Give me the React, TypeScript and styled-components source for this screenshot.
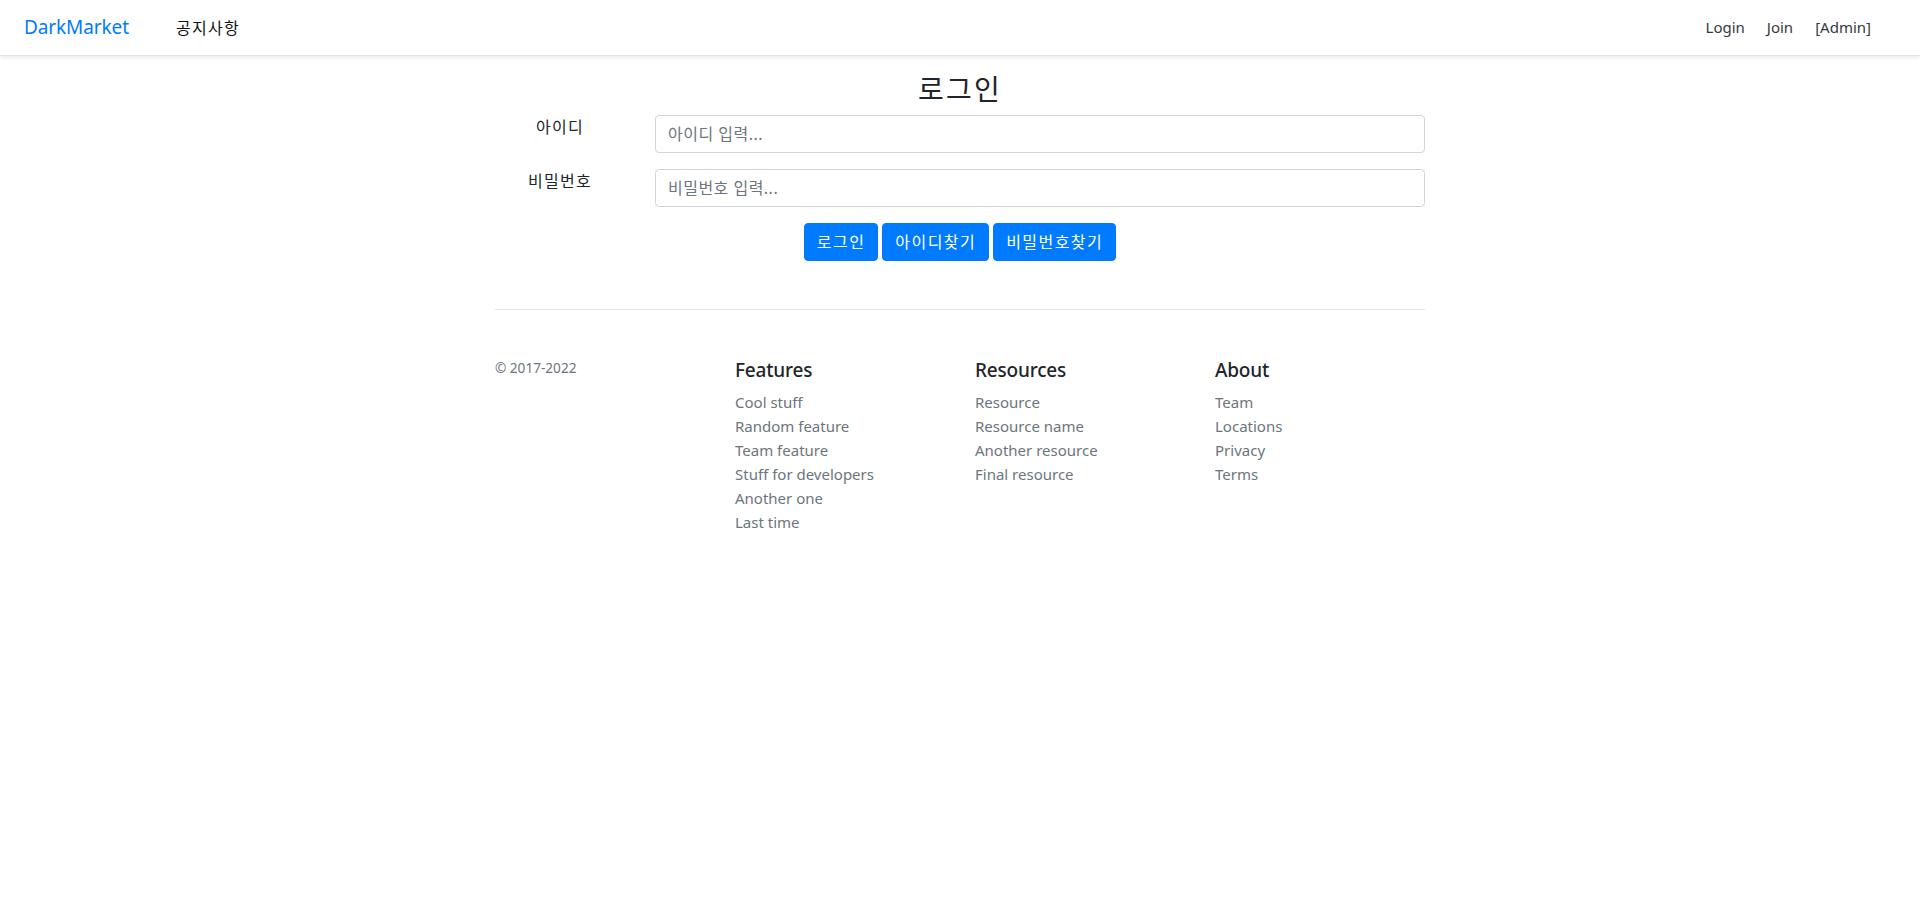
import React from "react";
import styled, { createGlobalStyle } from "styled-components";

const GlobalStyle = createGlobalStyle`
  html, body { margin: 0; padding: 0; background: #fff; }
  body {
    font-family: "Noto Sans", "Noto Sans CJK KR", sans-serif;
    font-size: 16px;
    line-height: 1.5;
    color: #212529;
  }
  * { box-sizing: border-box; }
`;

const NavBar = styled.nav`
  height: 56px;
  display: flex;
  align-items: center;
  padding: 0 49px 0 24px;
  background: #fff;
  box-shadow: 0 2px 4px rgba(0, 0, 0, 0.075);
  border-bottom: 1px solid #e3e4e8;
`;

const Brand = styled.a`
  width: 152px;
  font-size: 19px;
  letter-spacing: -0.1px;
  color: #007bff;
  text-decoration: none;
`;

const NavLink = styled.a<{ $korean?: boolean }>`
  font-size: ${(p) => (p.$korean ? "16px" : "15px")};
  letter-spacing: ${(p) => (p.$korean ? "0.08em" : "0")};
  color: ${(p) => (p.$korean ? "#111" : "#343a40")};
  text-decoration: none;
`;

const RightNav = styled.div`
  margin-left: auto;
  display: flex;
  gap: 22px;
`;

const Container = styled.main`
  width: 930px;
  margin: 0 auto;
  padding-top: 17px;
`;

const Title = styled.h3`
  margin: 0 0 8px;
  text-align: center;
  font-size: 28px;
  line-height: 1.2;
  font-weight: 400;
  letter-spacing: 0.08em;
`;

const FormRow = styled.div`
  display: grid;
  grid-template-columns: 130px 1fr;
  column-gap: 30px;
  margin-bottom: 16px;
`;

const Label = styled.label`
  text-align: center;
  line-height: 24px;
  letter-spacing: 0.08em;
`;

const Input = styled.input`
  height: 38px;
  padding: 6px 12px;
  border: 1px solid #ced4da;
  border-radius: 4px;
  font-size: 16px;
  font-family: inherit;
  letter-spacing: 0.03em;
  color: #495057;
  &::placeholder { color: #6c757d; }
`;

const ButtonRow = styled.div`
  display: flex;
  justify-content: center;
  gap: 4px;
`;

const Button = styled.button`
  height: 38px;
  padding: 0 12px;
  background: #007bff;
  color: #fff;
  border: 1px solid #007bff;
  border-radius: 4px;
  font-size: 16px;
  font-family: inherit;
  line-height: 1.5;
  letter-spacing: 0.09em;
`;

const Footer = styled.footer`
  margin-top: 48px;
  padding-top: 48px;
  border-top: 1px solid rgba(0, 0, 0, 0.1);
  display: grid;
  grid-template-columns: repeat(4, 1fr);
  column-gap: 30px;
`;

const Copy = styled.small`
  display: block;
  font-size: 13.6px;
  color: #6c757d;
`;

const ColTitle = styled.h5`
  margin: 0 0 8px;
  font-size: 19px;
  letter-spacing: -0.2px;
  line-height: 24px;
  font-weight: 500;
  color: #212529;
`;

const LinkList = styled.ul`
  list-style: none;
  margin: 0;
  padding: 0;
`;

const FootLink = styled.a`
  color: #6c757d;
  text-decoration: none;
  font-size: 15px;
  line-height: 24px;
`;

const cols = [
  { title: "Features", items: ["Cool stuff", "Random feature", "Team feature", "Stuff for developers", "Another one", "Last time"] },
  { title: "Resources", items: ["Resource", "Resource name", "Another resource", "Final resource"] },
  { title: "About", items: ["Team", "Locations", "Privacy", "Terms"] },
];

export default function App() {
  return (
    <>
      <GlobalStyle />
      <NavBar>
        <Brand href="#">DarkMarket</Brand>
        <NavLink $korean href="#">공지사항</NavLink>
        <RightNav>
          <NavLink href="#">Login</NavLink>
          <NavLink href="#">Join</NavLink>
          <NavLink href="#">[Admin]</NavLink>
        </RightNav>
      </NavBar>
      <Container>
        <Title>로그인</Title>
        <FormRow>
          <Label>아이디</Label>
          <Input placeholder="아이디 입력..." />
        </FormRow>
        <FormRow>
          <Label>비밀번호</Label>
          <Input type="password" placeholder="비밀번호 입력..." />
        </FormRow>
        <ButtonRow>
          <Button>로그인</Button>
          <Button>아이디찾기</Button>
          <Button>비밀번호찾기</Button>
        </ButtonRow>
        <Footer>
          <div>
            <Copy>© 2017-2022</Copy>
          </div>
          {cols.map((c) => (
            <div key={c.title}>
              <ColTitle>{c.title}</ColTitle>
              <LinkList>
                {c.items.map((i) => (
                  <li key={i}>
                    <FootLink href="#">{i}</FootLink>
                  </li>
                ))}
              </LinkList>
            </div>
          ))}
        </Footer>
      </Container>
    </>
  );
}
